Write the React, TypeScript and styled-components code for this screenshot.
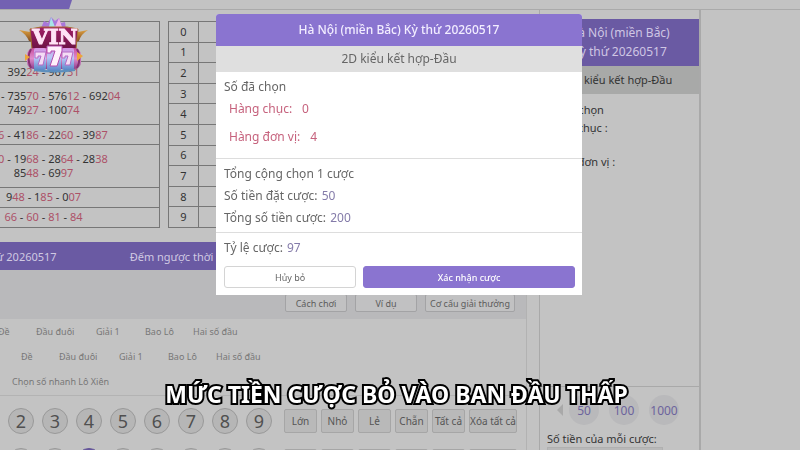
import React from "react";
import styled, { createGlobalStyle } from "styled-components";

const GlobalStyle = createGlobalStyle`
  * { box-sizing: border-box; }
  body { margin: 0; background: #c3c3c3; overflow: hidden; }
  body, button, input { font-family: "Noto Sans", "Open Sans", sans-serif; }
  button { margin: 0; padding: 0; cursor: pointer; }
`;

const Page = styled.div`
  height: 100vh;
  overflow: hidden;
  background: #c3c3c3;
  color: #333;
  font-size: 12px;
`;

const TopBar = styled.nav`
  height: 10px;
  border-bottom: 1px solid #aaa;
`;

const ActiveTab = styled.div`
  width: 72px;
  height: 9px;
  background: #7361b2;
  clip-path: polygon(0 0, 100% 0, 96% 100%, 0 100%);
`;

const Columns = styled.main`
  display: grid;
  grid-template-columns: minmax(0, 1fr) 162px;
  padding-right: 99px;
`;

const Board = styled.section`
  min-width: 0;
`;

const Results = styled.div`
  display: flex;
  gap: 8px;
  margin: 11px 7px 0 -73px;
`;

const PrizeTable = styled.table`
  flex: 0 0 233px;
  width: 233px;
  height: 207px;
  border-collapse: collapse;
  font-size: 11px;
  line-height: 14px;
  text-align: center;
  td { border: 1px solid #777; padding: 0; white-space: nowrap; }
`;

const PrizeRow = styled.tr<{ $tall?: boolean }>`
  height: ${(p) => (p.$tall ? 42 : 20)}px;
`;

const Tail = styled.span`
  color: #ad5168;
`;

const DigitTable = styled.table`
  flex: 1;
  height: 207px;
  border-collapse: collapse;
  font-size: 11px;
  line-height: 14px;
  text-align: center;
  th, td { border: 1px solid #777; padding: 0; font-weight: 400; }
  th { width: 30px; }
`;

const DrawBar = styled.div`
  display: flex;
  align-items: center;
  gap: 73px;
  height: 28px;
  margin: 14px 7px 0 0;
  background: #6a5aa3;
  color: #d0c9e2;
  font-size: 11px;
  white-space: nowrap;
`;

const DrawName = styled.span`
  margin-left: -30px;
`;

const Play = styled.div`
  margin-right: 12px;
  border-right: 1px solid #b2b2b2;
`;

const HelpBar = styled.div`
  display: flex;
  justify-content: flex-end;
  align-items: flex-end;
  gap: 8px;
  height: 49px;
  padding: 0 11px 7px 0;
  background: #b9b9bb;
`;

const HelpButton = styled.button<{ $wide?: boolean }>`
  width: ${(p) => (p.$wide ? 90 : 62)}px;
  height: 18px;
  border: 1px solid #a3a3a5;
  border-radius: 2px;
  background: #c1c1c2;
  color: #5c5c5c;
  font-size: 9px;
  white-space: nowrap;
`;

const Modes = styled.div`
  height: 77px;
  border-bottom: 1px solid #b3b3b3;
`;

const ModeRow = styled.div<{ $start: number }>`
  display: grid;
  grid-template-columns: 38px 60px 49px 48px 60px;
  height: 25px;
  margin-left: ${(p) => p.$start}px;
`;

const Mode = styled.button`
  border: 0;
  background: none;
  color: #777;
  font-size: 9px;
  text-align: left;
  white-space: nowrap;
`;

const Picker = styled.div`
  display: flex;
  justify-content: space-between;
  align-items: center;
  height: 26px;
  margin: 12px 9px 14px -26px;
`;

const Balls = styled.div`
  display: flex;
  gap: 8px;
`;

const Ball = styled.button<{ $on?: boolean }>`
  width: 26px;
  height: 26px;
  border: 1px solid ${(p) => (p.$on ? "#65569a" : "#999")};
  border-radius: 50%;
  background: ${(p) => (p.$on ? "#65569a" : "#b6b6b6")};
  color: ${(p) => (p.$on ? "#ddd" : "#505050")};
  font-size: 18px;
  line-height: 22px;
`;

const Quick = styled.div`
  display: flex;
  gap: 4px;
`;

const QuickButton = styled.button<{ $wide?: boolean }>`
  width: ${(p) => (p.$wide ? 48 : 33)}px;
  height: 24px;
  border: 1px solid #a6a6a6;
  border-radius: 2px;
  background: #b9b9b9;
  color: #555;
  font-size: 10px;
  white-space: nowrap;
`;

const Slip = styled.aside`
  display: flex;
  flex-direction: column;
  height: calc(100vh - 10px);
  min-height: 440px;
  padding-top: 9px;
  border-right: 2px solid #a9a9a9;
  border-left: 1px solid #a9a9a9;
`;

const SlipTitle = styled.h2`
  height: 47px;
  margin: 0;
  padding-top: 4px;
  background: #6a5aa3;
  color: #cfc6e4;
  font-size: 12px;
  font-weight: 400;
  line-height: 19px;
  text-align: center;
`;

const SlipType = styled.div`
  height: 28px;
  background: #a8a9a8;
  font-size: 11px;
  line-height: 27px;
  text-align: center;
`;

const SlipPicks = styled.div`
  flex: 1;
  padding: 7px;
  border-bottom: 1px solid #a9a9a9;
  font-size: 11px;
  line-height: 18px;
  p { margin: 0; }
  p + p + p { margin-top: 16px; }
`;

const Stake = styled.div`
  height: 63px;
  padding: 8px 7px 0;
  overflow: hidden;
`;

const Chips = styled.div`
  display: flex;
  align-items: center;
  gap: 10px;
  padding-left: 10px;
  margin-bottom: 5px;
`;

const Prev = styled.button`
  width: 6px;
  height: 12px;
  margin-right: -4px;
  border: 0;
  background: #a9a9a9;
  clip-path: polygon(0 50%, 100% 0, 100% 100%);
`;

const Chip = styled.button`
  width: 30px;
  height: 30px;
  border: 0;
  border-radius: 50%;
  background: #b9b9bb;
  color: #6c639d;
  font-size: 12px;
`;

const StakeLabel = styled.label`
  display: block;
  font-size: 11px;
  line-height: 17px;
  white-space: nowrap;
`;

const StakeInput = styled.input`
  display: block;
  width: 116px;
  height: 20px;
  border: 1px solid #b0b0b0;
  background: #b8b8b8;
`;

const LogoSvg = styled.svg`
  position: fixed;
  top: 14px;
  left: 17px;
`;

const Overlay = styled.div`
  position: fixed;
  inset: 0;
  display: flex;
  justify-content: center;
  align-items: flex-start;
  padding: 14px 2px 0 0;
`;

const Dialog = styled.section`
  width: 366px;
  border-radius: 3px 3px 0 0;
  overflow: hidden;
  background: #fff;
  color: #666;
  font-size: 12px;
`;

const DialogTitle = styled.h1`
  margin: 0;
  background: #8a74d0;
  color: #f2edff;
  font-size: 12px;
  font-weight: 500;
  line-height: 32px;
  text-align: center;
`;

const DialogType = styled.div`
  background: #dfdfdf;
  line-height: 26px;
  text-align: center;
`;

const Group = styled.div<{ $top: number; $bottom: number }>`
  padding: ${(p) => p.$top}px 8px ${(p) => p.$bottom}px;
  border-bottom: 1px solid #ddd;
  line-height: 22px;
`;

const Pick = styled.div`
  display: flex;
  gap: 10px;
  padding-left: 5px;
  margin-bottom: 6px;
  color: #c6627d;
`;

const Amount = styled.span`
  margin-left: 1px;
  color: #847ba9;
`;

const Footer = styled.div`
  padding: 4px 7px 7px 8px;
  line-height: 22px;
`;

const Actions = styled.div`
  display: grid;
  grid-template-columns: 5fr 8fr;
  gap: 7px;
  margin-top: 7px;
`;

const ActionButton = styled.button<{ $primary?: boolean }>`
  height: 22px;
  border: 1px solid ${(p) => (p.$primary ? "#8a74d0" : "#d4d4d4")};
  border-radius: 3px;
  background: ${(p) => (p.$primary ? "#8a74d0" : "#fff")};
  color: ${(p) => (p.$primary ? "#fff" : "#666")};
  font-size: 9px;
  font-weight: ${(p) => (p.$primary ? 500 : 400)};
`;

const Caption = styled.p`
  position: fixed;
  right: 0;
  bottom: 42px;
  left: 0;
  margin: 0;
  padding-right: 7px;
  color: #fff;
  font-family: "Noto Sans", sans-serif;
  font-size: 23px;
  font-weight: 700;
  line-height: 28px;
  text-align: center;
  white-space: nowrap;
  -webkit-text-stroke: 4px #000;
  paint-order: stroke fill;
`;

const prizes: string[][][] = [
  [[]],
  [[]],
  [["39224", "96731"]],
  [["18345", "73570", "57612", "69204"], ["74927", "10074"]],
  [["5346", "4186", "2260", "3987"]],
  [["7120", "1968", "2864", "2838"], ["8548", "6997"]],
  [["948", "185", "007"]],
  [["66", "60", "81", "84"]],
];

const modes = ["Đề", "Đầu đuôi", "Giải 1", "Bao Lô", "Hai số đầu"];
const digits = [0, 1, 2, 3, 4, 5, 6, 7, 8, 9];
const quick = ["Lớn", "Nhỏ", "Lẻ", "Chẵn", "Tất cả", "Xóa tất cả"];

function NumberLine({ items }: { items: string[] }) {
  return (
    <div>
      {items.map((n, i) => (
        <React.Fragment key={n}>
          {i > 0 && " - "}
          {n.slice(0, -2)}
          <Tail>{n.slice(-2)}</Tail>
        </React.Fragment>
      ))}
    </div>
  );
}

function Logo() {
  return (
    <LogoSvg width="74" height="62" viewBox="0 0 74 62" role="img" aria-label="VIN 777">
      <defs>
        <linearGradient id="board" x1="0" y1="0" x2="0" y2="1">
          <stop offset="0" stopColor="#a01f66" />
          <stop offset="1" stopColor="#6c1244" />
        </linearGradient>
        <linearGradient id="drum" x1="0" y1="0" x2="0" y2="1">
          <stop offset="0" stopColor="#c94fa0" />
          <stop offset="0.5" stopColor="#df8ccc" />
          <stop offset="1" stopColor="#8f3d8c" />
        </linearGradient>
        <linearGradient id="reel" x1="0" y1="0" x2="0" y2="1">
          <stop offset="0" stopColor="#d78fe0" />
          <stop offset="0.45" stopColor="#b9c8f6" />
          <stop offset="1" stopColor="#5b86c8" />
        </linearGradient>
        <linearGradient id="gold" x1="0" y1="0" x2="0" y2="1">
          <stop offset="0" stopColor="#e5a743" />
          <stop offset="1" stopColor="#75401a" />
        </linearGradient>
      </defs>
      <path d="M24 14 27 7 31 9 34 3 38 7 42 4 44 9 48 8 49 15Z" fill="#a877da" />
      <path d="M32 13 34 3 38 13Z" fill="#a6e4e8" />
      <path d="M38 13 42 4 45 13Z" fill="#f0b4e7" />
      <path d="M2 16 13 18 18 15 20 29 12 27Q9 20 2 16ZM71 16 61 18 56 15 54 29 62 27Q64 20 71 16Z" fill="url(#gold)" />
      <path d="M13 15 24 13 50 13 61 15 59 35 15 35Z" fill="url(#board)" stroke="#a86f30" strokeWidth="1" />
      <rect x="10" y="34" width="54" height="21" rx="7" fill="url(#drum)" />
      <path d="M14 35Q9 44 14 54M60 35Q65 44 60 54" fill="none" stroke="#863170" strokeWidth="2" />
      <path d="M8 40 13 43 8 47ZM60 38 66 42 60 47Z" fill="#eca53c" />
      <rect x="17" y="34" width="12" height="22" rx="2" fill="url(#reel)" />
      <rect x="30" y="32" width="14" height="25" rx="2" fill="url(#reel)" />
      <rect x="45" y="34" width="12" height="22" rx="2" fill="url(#reel)" />
      <path d="M18 38V44H21V42H24L21 51H26L29 38ZM45 38V44H48V42H51L48 51H53L56 38Z" fill="#f4dcf5" stroke="#b568c4" strokeWidth="1" />
      <path d="M30 32V39H34V37H38L33 52H40L45 37V32Z" fill="#fff0fb" stroke="#b34cae" strokeWidth="1" />
      <path d="M17 56Q37 59 58 56" fill="none" stroke="#5c8fbd" strokeWidth="2" />
      <g fontFamily="DejaVu Serif, serif" fontSize="21" fontWeight="700" fill="#ffe3f6" stroke="#ffe3f6" strokeWidth="1" textAnchor="middle">
        <text x="38" y="30">VIN</text>
      </g>
    </LogoSvg>
  );
}

export default function App() {
  return (
    <>
      <GlobalStyle />
      <Page>
        <TopBar>
          <ActiveTab />
        </TopBar>
        <Columns>
          <Board>
            <Results>
              <PrizeTable>
                <tbody>
                  {prizes.map((lines, i) => (
                    <PrizeRow key={i} $tall={lines.length > 1}>
                      <td>
                        {lines.map((items, j) => (
                          <NumberLine key={j} items={items} />
                        ))}
                      </td>
                    </PrizeRow>
                  ))}
                </tbody>
              </PrizeTable>
              <DigitTable>
                <tbody>
                  {digits.map((d) => (
                    <tr key={d}>
                      <th scope="row">{d}</th>
                      <td />
                    </tr>
                  ))}
                </tbody>
              </DigitTable>
            </Results>
            <DrawBar>
              <DrawName>Kỳ thứ 20260517</DrawName>
              <span>Đếm ngược thời gian</span>
            </DrawBar>
            <Play>
              <HelpBar>
                <HelpButton>Cách chơi</HelpButton>
                <HelpButton>Ví dụ</HelpButton>
                <HelpButton $wide>Cơ cấu giải thưởng</HelpButton>
              </HelpBar>
              <Modes>
                <ModeRow $start={-2}>
                  {modes.map((m) => (
                    <Mode key={m}>{m}</Mode>
                  ))}
                </ModeRow>
                <ModeRow $start={21}>
                  {modes.map((m) => (
                    <Mode key={m}>{m}</Mode>
                  ))}
                </ModeRow>
                <ModeRow $start={12}>
                  <Mode>Chọn số nhanh Lô Xiên</Mode>
                </ModeRow>
              </Modes>
              {[-1, 4].map((picked) => (
                <Picker key={picked}>
                  <Balls>
                    {digits.slice(1).map((d) => (
                      <Ball key={d} $on={d === picked}>
                        {d}
                      </Ball>
                    ))}
                  </Balls>
                  <Quick>
                    {quick.map((q) => (
                      <QuickButton key={q} $wide={q.length > 6}>
                        {q}
                      </QuickButton>
                    ))}
                  </Quick>
                </Picker>
              ))}
            </Play>
          </Board>
          <Slip>
            <SlipTitle>
              Hà Nội (miền Bắc)
              <br />
              Kỳ thứ 20260517
            </SlipTitle>
            <SlipType>2D kiểu kết hợp-Đầu</SlipType>
            <SlipPicks>
              <p>Số đã chọn</p>
              <p>Hàng chục :</p>
              <p>Hàng đơn vị :</p>
            </SlipPicks>
            <Stake>
              <Chips>
                <Prev aria-label="Trước" />
                <Chip>50</Chip>
                <Chip>100</Chip>
                <Chip>1000</Chip>
              </Chips>
              <StakeLabel htmlFor="stake">Số tiền của mỗi cược:</StakeLabel>
              <StakeInput id="stake" />
            </Stake>
          </Slip>
        </Columns>
      </Page>
      <Overlay>
        <Dialog role="dialog" aria-labelledby="dialog-title">
          <DialogTitle id="dialog-title">Hà Nội (miền Bắc) Kỳ thứ 20260517</DialogTitle>
          <DialogType>2D kiểu kết hợp-Đầu</DialogType>
          <Group $top={4} $bottom={4}>
            <div>Số đã chọn</div>
            <Pick>
              <span>Hàng chục:</span>
              <span>0</span>
            </Pick>
            <Pick>
              <span>Hàng đơn vị:</span>
              <span>4</span>
            </Pick>
          </Group>
          <Group $top={4} $bottom={3}>
            <div>Tổng cộng chọn 1 cược</div>
            <div>
              Số tiền đặt cược: <Amount>50</Amount>
            </div>
            <div>
              Tổng số tiền cược: <Amount>200</Amount>
            </div>
          </Group>
          <Footer>
            <div>
              Tỷ lệ cược: <Amount>97</Amount>
            </div>
            <Actions>
              <ActionButton>Hủy bỏ</ActionButton>
              <ActionButton $primary>Xác nhận cược</ActionButton>
            </Actions>
          </Footer>
        </Dialog>
      </Overlay>
      <Logo />
      <Caption>MỨC TIỀN CƯỢC BỎ VÀO BAN ĐẦU THẤP</Caption>
    </>
  );
}
